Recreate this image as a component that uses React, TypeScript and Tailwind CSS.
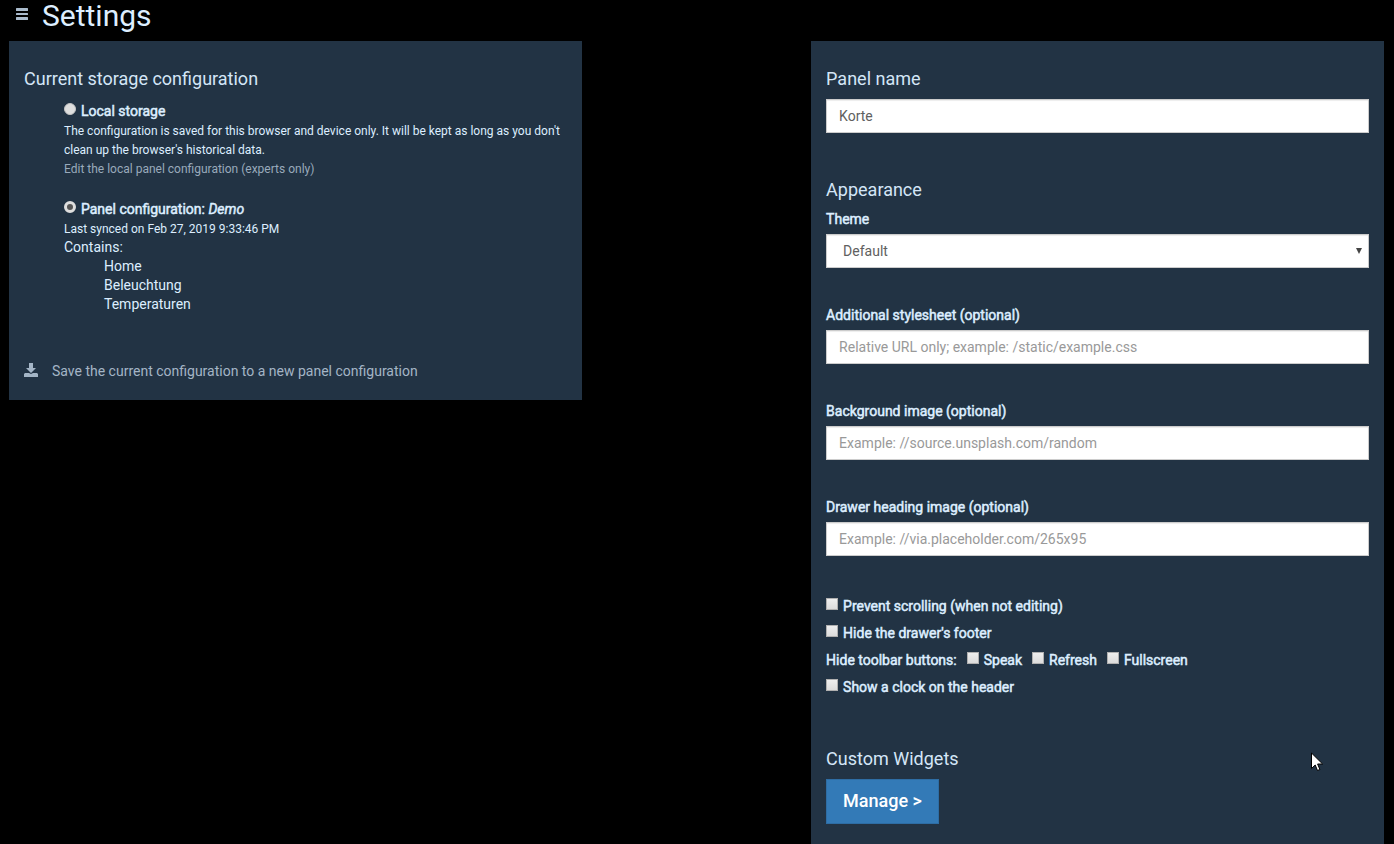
import { useId, useState } from "react";
import type { ReactNode } from "react";

type FieldProps = {
  label: string;
  placeholder: string;
};

type CheckProps = {
  label: string;
};

const pages = ["Home", "Beleuchtung", "Temperaturen"];

const boldText = "[-webkit-text-stroke:0.5px_currentColor]";
const controlStyle =
  "h-[34px] w-full appearance-none rounded-none border border-[#cccccc] bg-white text-sm text-[#606060] shadow-[inset_0_1px_1px_rgba(0,0,0,0.075)] outline-none";

function MenuIcon() {
  return (
    <svg className="h-3 w-3" viewBox="0 0 12 12" fill="currentColor" aria-hidden="true">
      <rect y="0" width="12" height="3" rx="0.5" />
      <rect y="5" width="12" height="2" rx="0.5" />
      <rect y="9" width="12" height="3" rx="0.5" />
    </svg>
  );
}

function SaveIcon() {
  return (
    <svg className="mt-0.5 h-3.5 w-3.5" viewBox="0 0 14 14" fill="currentColor" aria-hidden="true">
      <path d="M5 0h4v5h3L7 10 2 5h3z" />
      <path d="M1 10h4l2 1 2-1h4l1 1v3H0v-3z" />
    </svg>
  );
}

function Cursor() {
  return (
    <svg
      className="pointer-events-none absolute top-[752px] right-[71px] h-[19px] w-3"
      viewBox="0 0 12 19"
      aria-hidden="true"
    >
      <path
        d="M.5 1v15.500l3.700-3.500 2.300 5.500 2.400-1-2.300-5.500h5z"
        fill="white"
        stroke="black"
      />
    </svg>
  );
}

function Panel({ children }: { children: ReactNode }) {
  return <section className="w-5/12 bg-[#223344] px-[15px] pt-7">{children}</section>;
}

function Heading({ children }: { children: ReactNode }) {
  return <h2 className="text-lg leading-5 font-normal text-[#d4e6f7]">{children}</h2>;
}

function Field({ label, placeholder }: FieldProps) {
  const id = useId();

  return (
    <div className="mt-[37px]">
      <label htmlFor={id} className={`mb-[5px] block leading-5 ${boldText}`}>
        {label}
      </label>
      <input
        id={id}
        type="text"
        placeholder={placeholder}
        className={`${controlStyle} px-3 placeholder:text-[#999999]`}
      />
    </div>
  );
}

function Check({ label }: CheckProps) {
  return (
    <label className={`flex gap-[5px] leading-5 ${boldText}`}>
      <input
        type="checkbox"
        className="mt-0.5 h-3 w-3 appearance-none border border-[#b0b0b0] bg-linear-to-b from-[#eeeeee] to-[#dcdcdc] checked:from-[#337ab7] checked:to-[#337ab7]"
      />
      {label}
    </label>
  );
}

type StorageOptionProps = {
  checked: boolean;
  onSelect: () => void;
  children: ReactNode;
};

function StorageOption({ checked, onSelect, children }: StorageOptionProps) {
  return (
    <label className={`mb-px flex gap-[5px] leading-5 ${boldText}`}>
      <input
        type="radio"
        name="storage"
        checked={checked}
        onChange={onSelect}
        className="mt-0.5 h-3 w-3 appearance-none rounded-full border border-[#c4c4c4] bg-[#dedede] checked:border-[3px] checked:border-[#dedede] checked:bg-[#555555]"
      />
      <span>{children}</span>
    </label>
  );
}

export default function App() {
  const [storage, setStorage] = useState("panel");
  const [name, setName] = useState("Korte");

  return (
    <div className="relative min-h-screen bg-black font-[Roboto,sans-serif] text-sm text-[#ddeeff]">
      <header className="flex h-[41px] items-start pl-4">
        <button type="button" aria-label="Menu" className="mt-2 mr-3.5 text-[#aabbcc]">
          <MenuIcon />
        </button>
        <h1 className="text-3xl leading-8">Settings</h1>
      </header>

      <main className="flex items-start justify-between pr-2.5 pl-[9px]">
        <Panel>
          <Heading>Current storage configuration</Heading>
          <div className="mt-3 pl-10">
            <StorageOption checked={storage === "local"} onSelect={() => setStorage("local")}>
              Local storage
            </StorageOption>
            <p className="text-xs leading-[19px]">
              The configuration is saved for this browser and device only. It will be kept as long
              as you don't clean up the browser's historical data.
            </p>
            <a href="#edit" className="block text-xs leading-[19px] text-[#99aabb]">
              Edit the local panel configuration (experts only)
            </a>
          </div>
          <div className="mt-5 pl-10">
            <StorageOption checked={storage === "panel"} onSelect={() => setStorage("panel")}>
              Panel configuration: <em>Demo</em>
            </StorageOption>
            <p className="text-xs leading-[18px]">Last synced on Feb 27, 2019 9:33:46 PM</p>
            <p className="leading-[19px]">Contains:</p>
            <ul className="pl-10 leading-[19px]">
              {pages.map((page) => (
                <li key={page}>{page}</li>
              ))}
            </ul>
          </div>
          <a href="#save" className="mt-[47px] mb-[19px] flex gap-3.5 leading-5 text-[#a4b5c6]">
            <SaveIcon />
            Save the current configuration to a new panel configuration
          </a>
        </Panel>

        <Panel>
          <Heading>
            <label htmlFor="panel-name">Panel name</label>
          </Heading>
          <input
            id="panel-name"
            type="text"
            value={name}
            onChange={(event) => setName(event.target.value)}
            className={`${controlStyle} mt-2.5 mb-[47px] px-3`}
          />

          <Heading>Appearance</Heading>
          <label htmlFor="theme" className={`mt-[9px] mb-[5px] block leading-5 ${boldText}`}>
            Theme
          </label>
          <div className="relative">
            <select id="theme" className={`${controlStyle} px-4`}>
              <option>Default</option>
            </select>
            <svg
              className="pointer-events-none absolute top-3.5 right-[7px] h-1.5 w-1.5"
              viewBox="0 0 6 6"
              fill="#444444"
              aria-hidden="true"
            >
              <path d="M0 0h6L3 6z" />
            </svg>
          </div>

          <Field
            label="Additional stylesheet (optional)"
            placeholder="Relative URL only; example: /static/example.css"
          />
          <Field
            label="Background image (optional)"
            placeholder="Example: //source.unsplash.com/random"
          />
          <Field
            label="Drawer heading image (optional)"
            placeholder="Example: //via.placeholder.com/265x95"
          />

          <div className="mt-10 mb-[52px] flex flex-col gap-[7px]">
            <Check label="Prevent scrolling (when not editing)" />
            <Check label="Hide the drawer's footer" />
            <div className="flex gap-2.5">
              <span className={`leading-5 ${boldText}`}>Hide toolbar buttons:</span>
              <Check label="Speak" />
              <Check label="Refresh" />
              <Check label="Fullscreen" />
            </div>
            <Check label="Show a clock on the header" />
          </div>

          <Heading>Custom Widgets</Heading>
          <button
            type="button"
            className="mt-2.5 mb-5 h-[45px] border border-[#2e6da4] bg-[#337ab7] px-4 pb-0.5 text-lg font-medium text-white"
          >
            Manage &gt;
          </button>
        </Panel>
      </main>
      <Cursor />
    </div>
  );
}
